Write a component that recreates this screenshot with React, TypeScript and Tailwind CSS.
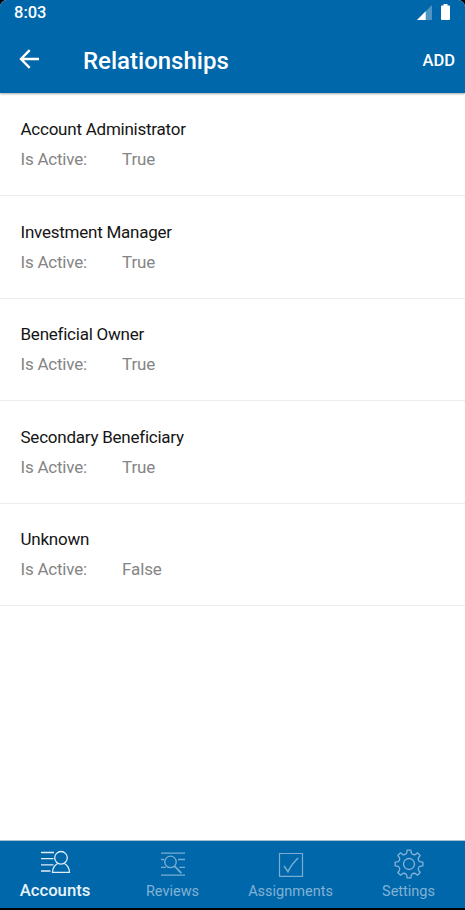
import type { ReactNode } from 'react';

const relationships = [
  { name: 'Account Administrator', active: 'True' },
  { name: 'Investment Manager', active: 'True' },
  { name: 'Beneficial Owner', active: 'True' },
  { name: 'Secondary Beneficiary', active: 'True' },
  { name: 'Unknown', active: 'False' },
];

function StatusBar() {
  return (
    <div className="flex h-[26px] items-start justify-between pl-[14px] pr-[15px]">
      <span className="mt-[3px] text-[16.5px] leading-5 font-medium">8:03</span>
      <div className="mt-1 flex gap-[9px]">
        <svg width="15" height="16" viewBox="0 0 15 16">
          <path d="M15 1V16H0Z" fill="#4f95c3" />
          <path d="M8.7 7.3V16H0Z" fill="#fff" />
        </svg>
        <svg width="9" height="16" viewBox="0 0 9 16">
          <path d="M2.5 0h4v1.5H8q1 0 1 1V15q0 1-1 1H1q-1 0-1-1V2.500q0-1 1-1h1.500Z" fill="#fff" />
        </svg>
      </div>
    </div>
  );
}

function AccountsIcon() {
  return (
    <svg width="32" height="28" viewBox="0 0 32 28" fill="none" stroke="#e0edf6" strokeWidth="1.3">
      <path d="M2 3.500H15M2 9.700H14.500M2 15.900H14.500M2 22H11.500" />
      <circle cx="22" cy="8.800" r="6.300" />
      <path d="M18.500 14.500C15.500 16.300 13.700 19.500 13.500 23.300H30.500C30.300 19.500 28.500 16.300 25.500 14.500" />
    </svg>
  );
}

function ReviewsIcon() {
  return (
    <svg width="32" height="28" viewBox="0 0 32 28" fill="none" stroke="#78add1" strokeWidth="1.3">
      <path d="M4 4.200H28M4 10.500H7M21 10.500H28M4 18.300H9M22.500 18.300H28M4 26.200H28" />
      <circle cx="13.500" cy="12.900" r="5.700" />
      <path d="M17.500 17.100L24.300 24.200" strokeWidth="1.700" />
    </svg>
  );
}

function AssignmentsIcon() {
  return (
    <svg width="32" height="28" viewBox="0 0 32 28" fill="none" stroke="#78add1" strokeWidth="1.2">
      <path d="M4.500 4.500H27.500V27.300H4.500Z" />
      <path d="M9 17L13 22.700Q17 14.500 23.200 9" strokeWidth="1.500" />
    </svg>
  );
}

// Eight teeth with concave flanks joined by short arcs of the gear body.
const gearPath = (() => {
  const at = (r: number, deg: number) => {
    const a = (deg * Math.PI) / 180;
    return `${(16 + r * Math.sin(a)).toFixed(2)} ${(15 - r * Math.cos(a)).toFixed(2)}`;
  };
  let d = '';
  for (let i = 0; i < 8; i++) {
    const c = i * 45;
    d += `${i ? 'L' : 'M'}${at(10.6, c - 16)}Q${at(11, c - 11)} ${at(12.2, c - 10)}L${at(14, c - 8)}`;
    d += `L${at(14, c + 8)}L${at(12.2, c + 10)}Q${at(11, c + 11)} ${at(10.6, c + 16)}`;
    d += `Q${at(10.1, c + 22.5)} ${at(10.6, c + 29)}`;
  }
  return `${d}Z`;
})();

function SettingsIcon() {
  return (
    <svg width="32" height="31" viewBox="0 0 32 31" fill="none" stroke="#84b4d6" strokeWidth="1.3" strokeLinejoin="round">
      <path d={gearPath} />
      <circle cx="16" cy="15" r="5.500" />
    </svg>
  );
}

function Tab({ label, active = false, children }: { label: string; active?: boolean; children: ReactNode }) {
  return (
    <div className="flex flex-col items-center">
      <div className="flex h-8 items-start">{children}</div>
      {active ? (
        <span className="text-[16.7px] leading-5 font-medium text-[#eaf3f9]">{label}</span>
      ) : (
        <span className="mt-px -ml-px text-[14.5px] leading-5 text-[#80b2d4]">{label}</span>
      )}
    </div>
  );
}

export default function App() {
  return (
    <div className="h-[910px] w-[465px] overflow-hidden bg-black font-['Roboto',sans-serif]">
      <div className="flex h-[908px] flex-col overflow-hidden rounded-t-[7px] bg-white">
        <header className="relative h-[93px] shrink-0 bg-[#0067ab] text-white shadow-[0_1px_2px_rgba(0,0,0,0.35)]">
          <StatusBar />
          <div className="flex h-[67px] items-center pr-[10px] pl-[19px]">
            <svg className="mt-[-1px]" width="21" height="20" viewBox="0 0 21 20" fill="none" stroke="#fff" strokeWidth="2.400">
              <path d="M20 10H2M10.700 1.200L2 10L10.700 18.800" />
            </svg>
            <h1 className="ml-[43px] mt-[3px] text-[24px] leading-8 font-medium">Relationships</h1>
            <span className="ml-auto mt-[2px] text-[16.5px] leading-5 font-medium">ADD</span>
          </div>
        </header>

        <main className="flex-1 pt-[0.6px]">
          {relationships.map((item) => (
            <div key={item.name} className="h-[102.500px] border-b border-[#ececec] pt-[25.800px] pl-[20.5px] text-[17px] leading-5">
              <div className="tracking-[-0.24px] text-[#151515]">{item.name}</div>
              <div className="mt-[10px] flex text-[#858585]">
                <span className="w-[101.500px] tracking-[-0.22px]">Is Active:</span>
                <span className="tracking-[-0.1px]">{item.active}</span>
              </div>
            </div>
          ))}
        </main>

        <nav className="h-[68px] shrink-0 border-t border-[#a9bfd3] bg-[#0067ab]">
          <div className="-ml-1 -mr-[3px] grid grid-cols-4 pt-[8px]">
            <Tab label="Accounts" active><AccountsIcon /></Tab>
            <Tab label="Reviews"><ReviewsIcon /></Tab>
            <Tab label="Assignments"><AssignmentsIcon /></Tab>
            <Tab label="Settings"><SettingsIcon /></Tab>
          </div>
        </nav>
      </div>
    </div>
  );
}
